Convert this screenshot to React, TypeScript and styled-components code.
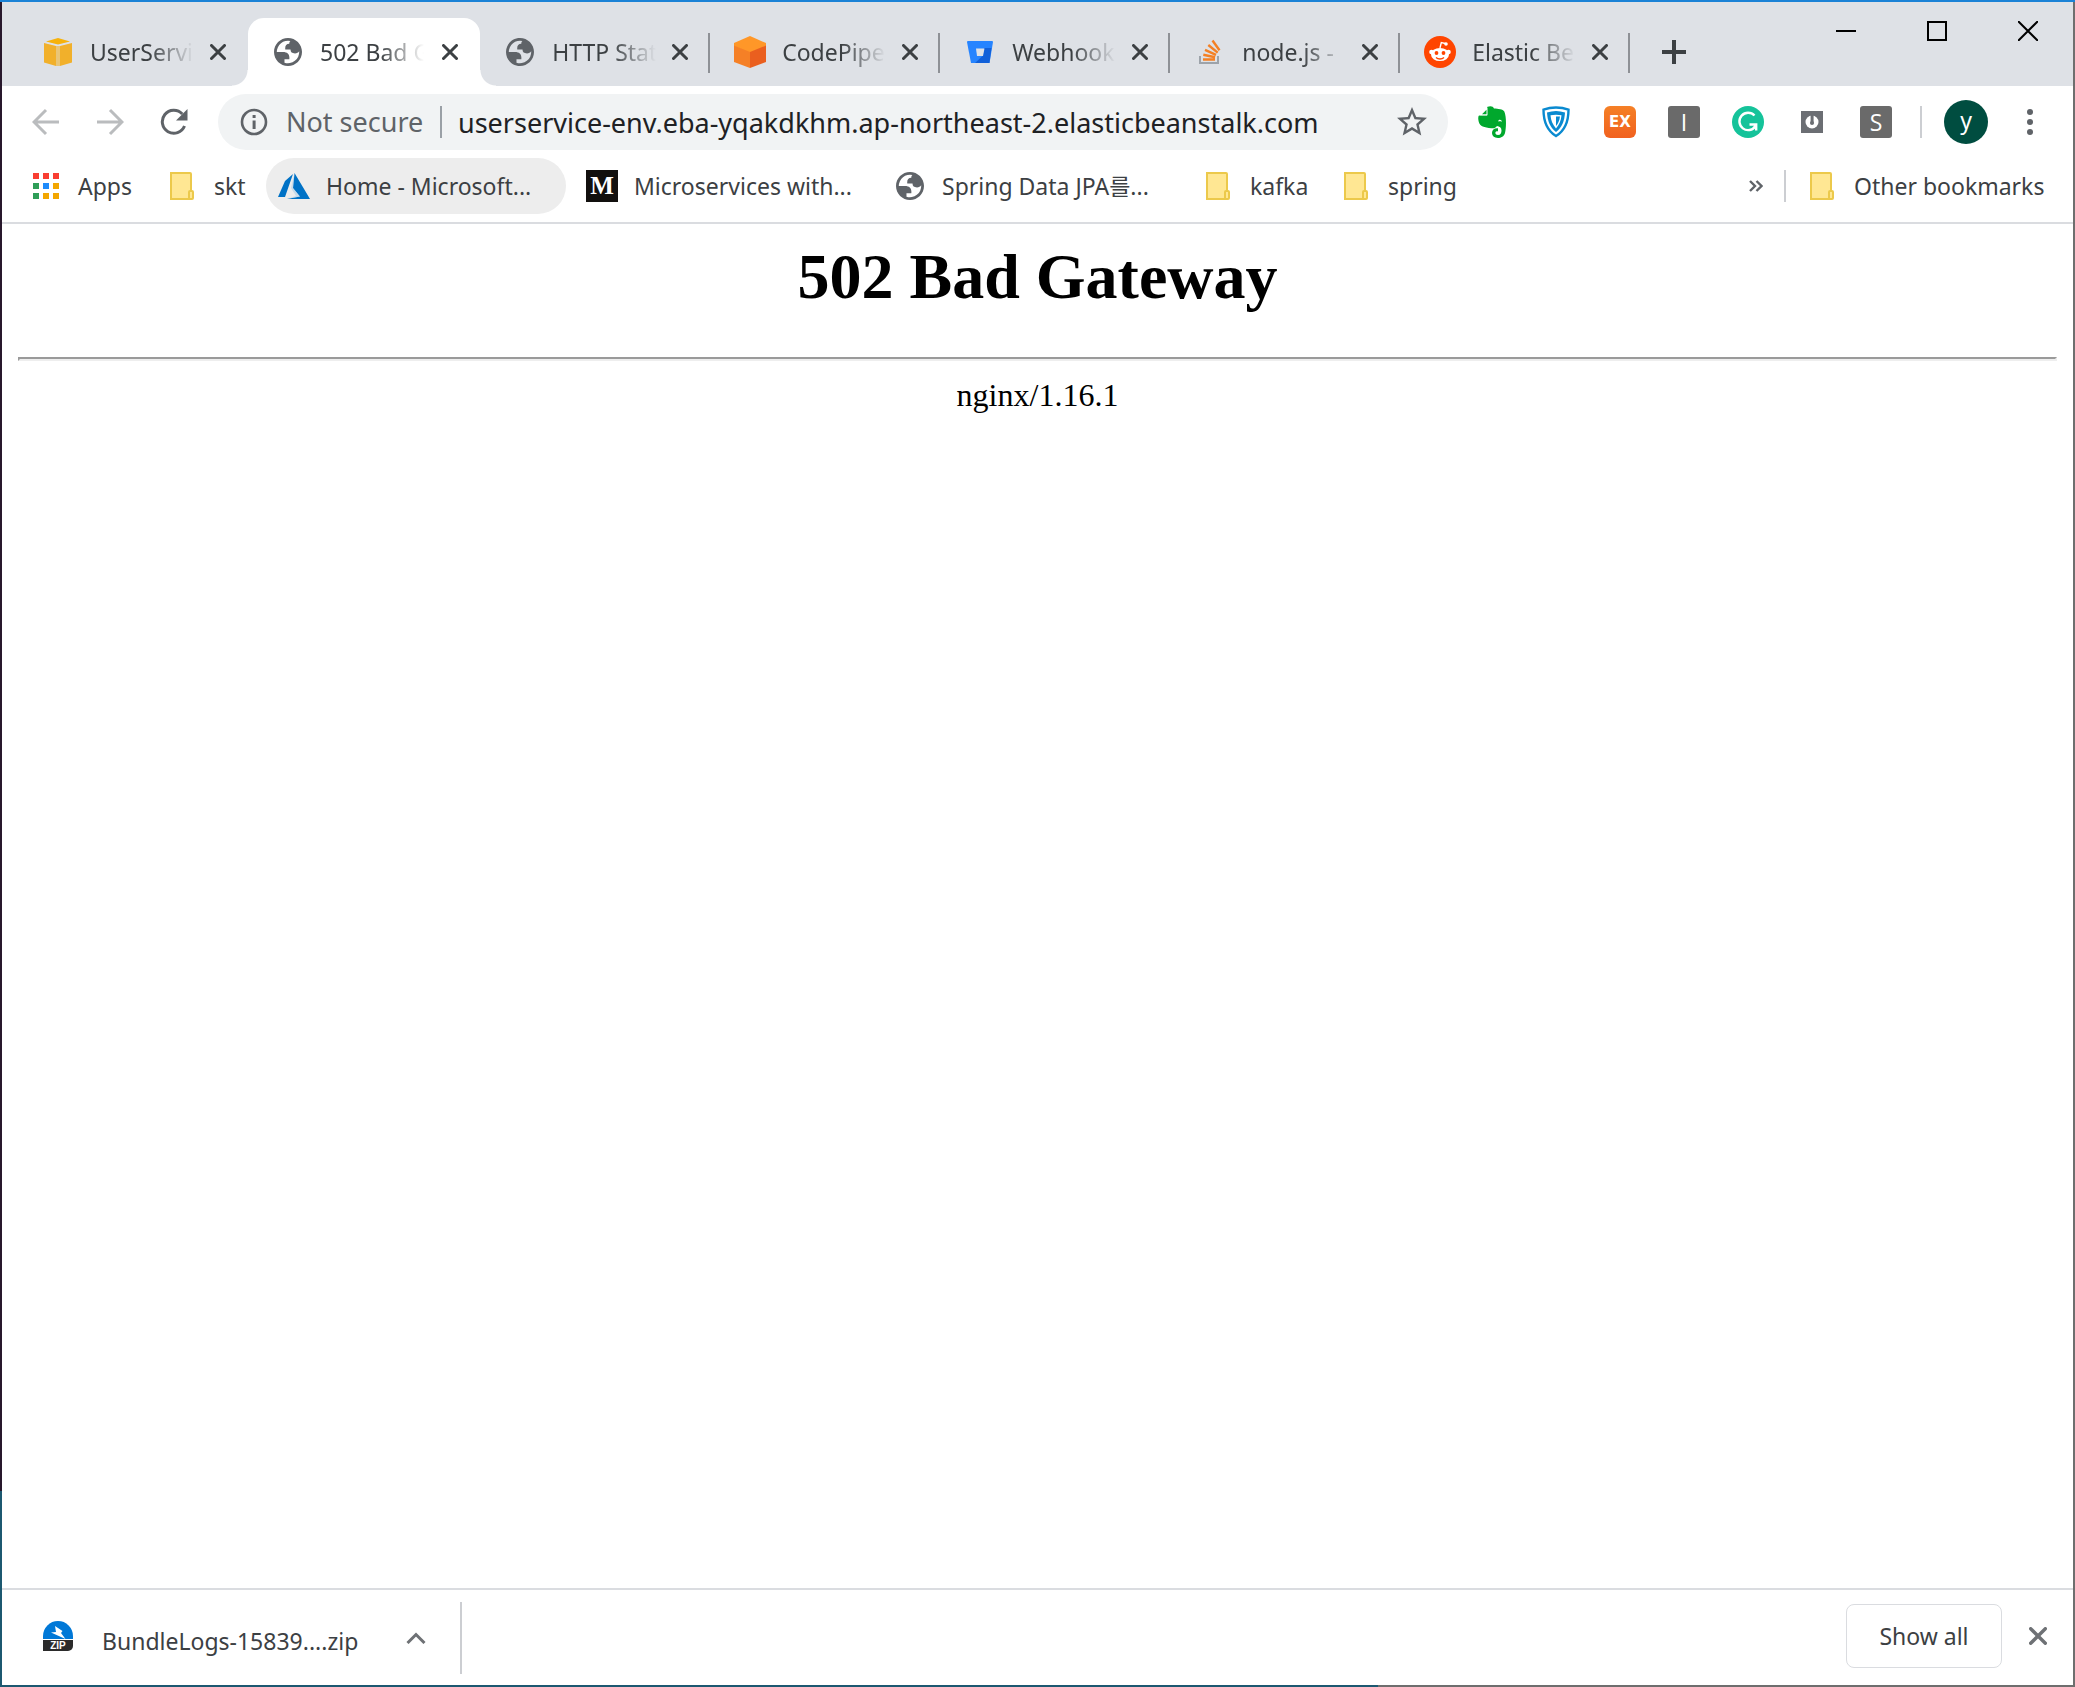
import React from "react";
import styled, { createGlobalStyle, css } from "styled-components";

const uiFont = `"Noto Sans", "Noto Sans CJK KR", sans-serif`;

const GlobalStyle = createGlobalStyle`
  *, *::before, *::after { box-sizing: border-box; }
  html, body { margin: 0; background: #fff; }
  button, input { font: inherit; color: inherit; }
`;

/* The 2px frame shows a dimmed desktop behind the window edges. */
const Window = styled.div`
  display: flex;
  flex-direction: column;
  min-height: 100vh;
  border: 2px solid transparent;
  background:
    linear-gradient(#fff, #fff) padding-box,
    linear-gradient(#1a82d6, #1a82d6) top / 100% 2px no-repeat border-box,
    linear-gradient(to right, #1c5870 66.4%, #6e6e6e 66.4%) bottom / 100% 2px no-repeat border-box,
    linear-gradient(#6e6e6e, #6e6e6e) right / 2px 100% no-repeat border-box,
    linear-gradient(#28182c 88.4%, #1c5870 88.4%) left / 2px 100% no-repeat border-box;
  color: #3c4043;
  font-family: ${uiFont};
  font-size: 23px;
  line-height: 32px;
`;

/* ---------- tab strip ---------- */

const TabStrip = styled.header`
  display: flex;
  align-items: stretch;
  height: 84px;
  padding: 16px 0 0 16px;
  background: #dee1e6;
`;

const Tab = styled.div<{ $active?: boolean; $divided?: boolean }>`
  position: relative;
  display: flex;
  align-items: center;
  flex: 0 0 230px;
  padding: 0 10px 0 24px;
  ${(p) =>
    p.$active &&
    css`
      background: #fff;
      border-radius: 16px 16px 0 0;
      &::before,
      &::after {
        content: "";
        position: absolute;
        bottom: 0;
        width: 16px;
        height: 16px;
      }
      &::before {
        left: -16px;
        background: radial-gradient(circle at 0 0, transparent 15px, #fff 16px);
      }
      &::after {
        right: -16px;
        background: radial-gradient(circle at 100% 0, transparent 15px, #fff 16px);
      }
    `}
  ${(p) =>
    p.$divided &&
    css`
      &::after {
        content: "";
        position: absolute;
        right: 0;
        top: 15px;
        width: 2px;
        height: 40px;
        background: #8e9196;
      }
    `}
`;

const TabIcon = styled.span`
  display: grid;
  place-items: center;
  flex: 0 0 32px;
  height: 32px;
`;

const TabTitle = styled.span`
  flex: 0 0 108px;
  margin-left: 16px;
  white-space: nowrap;
  mask-image: linear-gradient(to right, #000 60px, transparent 104px);
`;

const GhostButton = styled.button<{ $w?: number; $h?: number }>`
  display: grid;
  place-items: center;
  flex: none;
  width: ${(p) => p.$w ?? 56}px;
  height: ${(p) => p.$h ?? 56}px;
  padding: 0;
  border: 0;
  background: none;
`;

const WindowControls = styled.div`
  display: flex;
  margin: -16px 0 0 auto;
`;

/* ---------- toolbar ---------- */

const Toolbar = styled.div`
  display: flex;
  align-items: center;
  gap: 8px;
  padding: 8px 15px 8px 16px;
`;

const AddressBar = styled.form`
  display: flex;
  align-items: center;
  flex: 1;
  min-width: 0;
  height: 56px;
  margin: 0 8px;
  padding: 0 8px;
  border-radius: 28px;
  background: #f1f3f4;
  font-size: 27px;
`;

const Security = styled.label`
  flex: none;
  width: 156px;
  margin-left: 4px;
  border-right: 2px solid #9aa0a6;
  color: #5f6368;
  white-space: nowrap;
`;

const AddressInput = styled.input`
  flex: 1;
  min-width: 0;
  height: 48px;
  padding: 0 0 0 16px;
  border: 0;
  background: none;
  color: #202124;
`;

const Divider = styled.span<{ $h: number; $mx: number }>`
  flex: none;
  width: 2px;
  height: ${(p) => p.$h}px;
  margin: 0 ${(p) => p.$mx}px;
  background: #ccced2;
`;

const Avatar = styled.span`
  display: block;
  width: 44px;
  height: 44px;
  border-radius: 50%;
  background: #004d40;
  color: #fff;
  line-height: 40px;
`;

const LetterBadge = styled.span`
  width: 32px;
  height: 32px;
  border-radius: 3px;
  background: #6a6a6a;
  color: #fff;
  font-family: "Open Sans", sans-serif;
  line-height: 32px;
`;

const OrangeBadge = styled(LetterBadge)`
  border-radius: 6px;
  background: linear-gradient(#f58026, #f1611f);
  font-family: "DejaVu Sans", sans-serif;
  font-size: 15px;
  font-weight: bold;
`;

/* ---------- bookmarks ---------- */

const BookmarkBar = styled.nav`
  display: flex;
  align-items: center;
  gap: 8px;
  height: 66px;
  padding: 0 15px 8px 16px;
  border-bottom: 2px solid #dadce0;
`;

const Bookmark = styled.a<{ $w: number; $hover?: boolean }>`
  display: flex;
  align-items: center;
  flex: none;
  width: ${(p) => p.$w}px;
  height: 56px;
  padding-left: 12px;
  border-radius: 28px;
  background: ${(p) => (p.$hover ? "#ededed" : "transparent")};
  color: inherit;
  text-decoration: none;
  white-space: nowrap;
`;

const BookmarkText = styled.span`
  margin-left: 16px;
`;

const Spacer = styled.span`
  flex: 1;
`;

/* ---------- page ---------- */

const Page = styled.main`
  flex: 1;
  padding: 16px;
  color: #000;
  font-family: "Liberation Serif", serif;
  font-size: 32px;
  line-height: 36px;
  text-align: center;
`;

const Heading = styled.h1`
  margin: 0 0 43px;
  font-size: 64px;
  line-height: 74px;
`;

const Rule = styled.hr`
  height: 4px;
  margin: 0 0 16px;
  border: 2px solid;
  border-color: #9a9a9a #eee #eee #9a9a9a;
`;

/* ---------- download shelf ---------- */

const Shelf = styled.footer`
  display: flex;
  align-items: center;
  height: 97px;
  padding: 0 7px 0 40px;
  border-top: 2px solid #dadce0;
`;

const Download = styled.button`
  display: flex;
  align-items: center;
  margin-bottom: 4px;
  padding: 0;
  border: 0;
  background: none;
`;

const FileName = styled.span`
  width: 270px;
  margin-left: 28px;
  padding-top: 10px;
  text-align: left;
`;

const ShelfEnd = styled.div`
  display: flex;
  align-items: center;
  gap: 8px;
  margin: 0 0 4px auto;
`;

const ShowAll = styled.button`
  width: 156px;
  height: 64px;
  padding: 0;
  border: 1px solid #dadce0;
  border-radius: 8px;
  background: #fff;
`;

/* ---------- icons ---------- */

const Globe = () => (
  <svg width="28" height="28" viewBox="2 2 20 20" fill="#5f6368">
    <path
      fillRule="evenodd"
      d="M12 2c5.520 0 10 4.480 10 10s-4.480 10-10 10S2 17.520 2 12 6.480 2 12 2zM4 12h4.400c3.407.022 4.922 1.730 4.543 5.127H9.488v2.470a8.004 8.004 0 0 0 10.498-8.083C19.327 12.504 18.332 13 17 13c-2.137 0-3.206-.916-3.206-2.750h-3.748c-.274-2.728.683-4.092 2.870-4.092 0-.975.327-1.597.811-1.970A8.004 8.004 0 0 0 4 12z"
    />
  </svg>
);

const Close = ({ size = 16, color = "#3c4043", width = 3 }) => (
  <svg width={size} height={size} viewBox="0 0 16 16" stroke={color} strokeWidth={width} strokeLinecap="round">
    <path d="M1.500 1.500l13 13M14.500 1.500l-13 13" />
  </svg>
);

const AwsCube = () => (
  <svg width="28" height="28" viewBox="0 0 28 28">
    <path fill="#f7b20b" d="M2 3.500 14 0l12 3.500L14 6.500z" />
    <path fill="#f1b02b" d="M0 5 12 8v20L0 24.500zM28 5 16 8v20l12-3.500z" />
    <path fill="#e9c577" d="M12 8h4v20h-4z" />
  </svg>
);

const OrangeCube = () => (
  <svg width="32" height="32" viewBox="0 0 32 32">
    <path fill="#ff9728" d="M16 0 32 7v3l-16 7L0 10V7z" />
    <path fill="#f58026" d="M0 9.500 16 16v16L0 26z" />
    <path fill="#ea5f1f" d="M32 9.500 16 16v16l16-6z" />
  </svg>
);

const Bitbucket = () => (
  <svg width="26" height="24" viewBox="0 0 26 24">
    <path fill="#2684ff" d="M1 1h24a1 1 0 0 1 1 1l-3.500 21H4L0 2a1 1 0 0 1 1-1z" />
    <path fill="#0b54cc" d="M24.500 8H17l-1.500 8L8 23h14.500z" opacity=".75" />
    <path fill="#dee1e6" d="M9 8.500h8.500L16 16h-6z" />
  </svg>
);

const StackOverflow = () => (
  <svg width="24" height="26" viewBox="0 0 24 26" fill="none">
    <path stroke="#9da3aa" strokeWidth="2" d="M2 17v7h18v-7" />
    <path stroke="#f48024" strokeWidth="2.400" d="M5 20.500h12M5.300 15.800l11.800 2.400M7 10.800l11 5M10.300 6l9.400 7.600M14.500 1.500l7 9.700" />
  </svg>
);

const Reddit = () => (
  <svg width="32" height="32" viewBox="0 0 32 32">
    <circle cx="16" cy="16" r="16" fill="#ff4500" />
    <path d="M16 12l1.300-5.500 5 1.200" fill="none" stroke="#fff" strokeWidth="1.400" />
    <g fill="#fff">
      <circle cx="22" cy="8" r="1.800" />
      <circle cx="7.500" cy="16" r="2.300" />
      <circle cx="24.500" cy="16" r="2.300" />
      <ellipse cx="16" cy="18.500" rx="9" ry="6.600" />
    </g>
    <circle cx="12.500" cy="17" r="1.900" fill="#ff4500" />
    <circle cx="19.500" cy="17" r="1.900" fill="#ff4500" />
    <path d="M12 21.500c2 2 6 2 8 0" fill="none" stroke="#ff4500" strokeWidth="1.300" />
  </svg>
);

const Arrow = ({ flip = false }) => (
  <svg width="28" height="28" viewBox="0 0 28 28" fill="none" stroke="#babcbe" strokeWidth="3">
    <path d={flip ? "M1 14h24M14 2l12 12-12 12" : "M27 14H3M14 2 2 14l12 12"} />
  </svg>
);

const Reload = () => (
  <svg width="28" height="28" viewBox="0 0 28 28">
    <path d="M24.500 18a11.500 11.500 0 1 1-2.200-12" fill="none" stroke="#5f6368" strokeWidth="3" />
    <path d="M27.500 1v11.500H16z" fill="#5f6368" />
  </svg>
);

const Info = () => (
  <svg width="28" height="28" viewBox="0 0 28 28">
    <circle cx="14" cy="14" r="12" fill="none" stroke="#5f6368" strokeWidth="2.600" />
    <path fill="#5f6368" d="M12.600 7h3v3h-3zM12.600 12.500h3V21h-3z" />
  </svg>
);

const Star = () => (
  <svg width="30" height="30" viewBox="2 2 20 20" fill="#5f6368">
    <path d="M22 9.240l-7.190-.620L12 2 9.190 8.630 2 9.240l5.460 4.730L5.820 21 12 17.270 18.180 21l-1.630-7.030L22 9.240zM12 15.400l-3.760 2.270 1-4.280-3.320-2.880 4.380-.380L12 6.100l1.710 4.040 4.380.380-3.320 2.880 1 4.280L12 15.400z" />
  </svg>
);

const Evernote = () => (
  <svg width="28" height="32" viewBox="0 0 28 32">
    <path fill="#00a82d" d="M9 1c4-1.500 6-.5 7 1.500 4 .3 9 .6 10.300 3C28.500 10 28.300 22 27 27c-1 3.600-4 5-7 5-4 0-6-2.200-6-5.200 0-3.300 2.500-5 6-4.600v3.200c-1.600-.2-2.600.3-2.600 1.500 0 1.300 1 2 2.600 2 2.500 0 3.500-2 3.500-4.500 0-3-2-4-4.500-4.400-1.500 2-3 2.500-5.500 2.200C6 21.500 2 20.500.8 16 0 13 0 10.500 1 9.500h8z" />
    <path fill="#fff" d="M1.500 9.200 9.500 1.200v8z" />
    <path fill="#00a82d" d="M4 8.200 8.500 3.700v4.500z" />
    <path fill="#fff" d="M20 15.500c.5-2.500 3.500-2.500 4 .3-1.200-.5-2.500-.6-4-.3z" />
  </svg>
);

const Shield = () => (
  <svg width="28" height="32" viewBox="0 0 28 32">
    <path fill="#fff" stroke="#0a8ad0" strokeWidth="2.400" d="M14 1.500c4 0 8.500.7 12.500 2.200C26.500 15 23 24.500 14 30 5 24.500 1.500 15 1.500 3.700 5.500 2.200 10 1.500 14 1.500z" />
    <path fill="#0a8ad0" d="M14 5c3 0 6 .5 9 1.500C22.500 15 20 21.500 14 26 8 21.500 5.500 15 5 6.500 8 5.500 11 5 14 5z" />
    <path fill="#fff" d="M8.500 9.300c3-.9 8-.9 11 0-.4 5-2.300 9.700-5.500 13.200-3.200-3.500-5.100-8.200-5.500-13.200z" />
    <path fill="#0a8ad0" d="M14 10.500h4c-.5 3.800-1.800 7-4 9.500z" />
  </svg>
);

const Grammarly = () => (
  <svg width="32" height="32" viewBox="0 0 32 32" fill="none" stroke="#fff" strokeWidth="2.400">
    <circle cx="16" cy="16" r="16" fill="#15c39a" stroke="none" />
    <path d="M22.500 9.500a8.700 8.700 0 1 0 1 10.500M17.500 18.500h6.700v6" />
  </svg>
);

const PowerBox = () => (
  <svg width="22" height="22" viewBox="0 0 22 22">
    <path fill="#6b6e73" d="M0 0h22v22H0z" />
    <circle cx="11" cy="11" r="6.500" fill="#fff" />
    <path fill="#6b6e73" d="M9.600 3h3v9.500h-3z" />
    <circle cx="11" cy="12" r="2" fill="#6b6e73" />
  </svg>
);

const Dots = () => (
  <svg width="6" height="26" viewBox="0 0 6 26" fill="#5f6368">
    <circle cx="3" cy="3" r="3" />
    <circle cx="3" cy="13" r="3" />
    <circle cx="3" cy="23" r="3" />
  </svg>
);

const appColors = ["#f93e32", "#f93e32", "#f93e32", "#2f9e58", "#1f8bfb", "#f3a600", "#2f9e58", "#f3a600", "#f3a600"];

const AppsGrid = () => (
  <svg width="26" height="26" viewBox="0 0 26 26">
    {appColors.map((c, i) => (
      <rect key={i} x={(i % 3) * 10} y={Math.floor(i / 3) * 10} width="6" height="6" fill={c} />
    ))}
  </svg>
);

const Folder = () => (
  <svg width="24" height="28" viewBox="0 0 24 28" fill="#ffe793" stroke="#ecc94b" strokeWidth="2">
    <path d="M1 1h19a1 1 0 0 1 1 1v25H1z" />
    <rect x="19" y="19" width="4" height="8" rx="1" />
  </svg>
);

const Azure = () => (
  <svg width="32" height="26" viewBox="0 0 32 26">
    <path fill="#0072c6" d="M15 1 7 8 0 24h7zM16.500 0 32 26H9l13-2.500-7-8.500z" />
    <path fill="#8fc0e6" d="M9 26l13-2.500L15 15l1.500-15L13 15l5 8z" opacity=".4" />
  </svg>
);

const MediumBox = styled.span`
  width: 32px;
  height: 32px;
  background: #12100e;
  color: #fff;
  font: bold 25px/32px "Liberation Serif", serif;
  text-align: center;
`;

const ZipIcon = () => (
  <svg width="30" height="30" viewBox="0 0 30 30">
    <path fill="#0078d7" d="M0 18v-3a15 15 0 0 1 30 0v3z" />
    <path fill="#fff" d="M12 5l7.500 5-1.500 2 4.500 6L8 11.500l5-.5z" />
    <path fill="#2b2b2b" d="M0 19h30v6a5 5 0 0 1-5 5H0z" />
    <text x="15" y="28" fill="#fff" fontFamily="Liberation Sans, sans-serif" fontWeight="bold" fontSize="10" textAnchor="middle">ZIP</text>
  </svg>
);

/* ---------- data ---------- */

const tabs = [
  { title: "UserServi", icon: <AwsCube /> },
  { title: "502 Bad G", icon: <Globe />, active: true },
  { title: "HTTP Stat", icon: <Globe />, divided: true },
  { title: "CodePipe", icon: <OrangeCube />, divided: true },
  { title: "Webhook", icon: <Bitbucket />, divided: true },
  { title: "node.js -", icon: <StackOverflow />, divided: true },
  { title: "Elastic Be", icon: <Reddit />, divided: true },
];

const bookmarks = [
  { text: "Apps", icon: <AppsGrid />, w: 128 },
  { text: "skt", icon: <Folder />, w: 104 },
  { text: "Home - Microsoft...", icon: <Azure />, w: 300, hover: true },
  { text: "Microservices with...", icon: <MediumBox>M</MediumBox>, w: 300 },
  { text: "Spring Data JPA를...", icon: <Globe />, w: 300 },
  { text: "kafka", icon: <Folder />, w: 130 },
  { text: "spring", icon: <Folder />, w: 140 },
];

const extensions = [
  { name: "Evernote", icon: <Evernote /> },
  { name: "VPN", icon: <Shield /> },
  { name: "EX", icon: <OrangeBadge>EX</OrangeBadge> },
  { name: "I", icon: <LetterBadge>I</LetterBadge> },
  { name: "Grammarly", icon: <Grammarly /> },
  { name: "Power", icon: <PowerBox /> },
  { name: "S", icon: <LetterBadge>S</LetterBadge> },
];

export default function App() {
  return (
    <Window>
      <GlobalStyle />
      <TabStrip>
        {tabs.map((t) => (
          <Tab key={t.title} $active={t.active} $divided={t.divided}>
            <TabIcon>{t.icon}</TabIcon>
            <TabTitle>{t.title}</TabTitle>
            <GhostButton $w={40} $h={40} aria-label="Close tab">
              <Close />
            </GhostButton>
          </Tab>
        ))}
        <GhostButton $w={88} $h={68} aria-label="New tab">
          <svg width="24" height="24" viewBox="0 0 24 24" stroke="#3c4043" strokeWidth="4">
            <path d="M12 0v24M0 12h24" />
          </svg>
        </GhostButton>
        <WindowControls>
          <GhostButton $w={91} $h={58} aria-label="Minimize">
            <svg width="20" height="20" viewBox="0 0 20 20">
              <path d="M0 9h20v2H0z" />
            </svg>
          </GhostButton>
          <GhostButton $w={91} $h={58} aria-label="Maximize">
            <svg width="20" height="20" viewBox="0 0 20 20" fill="none" stroke="#000" strokeWidth="2">
              <path d="M1 1h18v18H1z" />
            </svg>
          </GhostButton>
          <GhostButton $w={91} $h={58} aria-label="Close window">
            <svg width="20" height="20" viewBox="0 0 20 20" stroke="#000" strokeWidth="2">
              <path d="M0 0l20 20M20 0 0 20" />
            </svg>
          </GhostButton>
        </WindowControls>
      </TabStrip>

      <Toolbar>
        <GhostButton aria-label="Back"><Arrow /></GhostButton>
        <GhostButton aria-label="Forward"><Arrow flip /></GhostButton>
        <GhostButton aria-label="Reload"><Reload /></GhostButton>
        <AddressBar>
          <GhostButton type="button" aria-label="Site information"><Info /></GhostButton>
          <Security htmlFor="address">Not secure</Security>
          <AddressInput id="address" defaultValue="userservice-env.eba-yqakdkhm.ap-northeast-2.elasticbeanstalk.com" />
          <GhostButton type="button" aria-label="Bookmark this page"><Star /></GhostButton>
        </AddressBar>
        {extensions.map((e) => (
          <GhostButton key={e.name} aria-label={e.name}>{e.icon}</GhostButton>
        ))}
        <Divider $h={32} $mx={8} />
        <GhostButton aria-label="Profile"><Avatar>y</Avatar></GhostButton>
        <GhostButton aria-label="Menu"><Dots /></GhostButton>
      </Toolbar>

      <BookmarkBar>
        {bookmarks.map((b) => (
          <Bookmark key={b.text} href="#" $w={b.w} $hover={b.hover}>
            <TabIcon>{b.icon}</TabIcon>
            <BookmarkText>{b.text}</BookmarkText>
          </Bookmark>
        ))}
        <Spacer />
        <GhostButton $w={40} aria-label="More bookmarks">
          <svg width="14" height="12" viewBox="0 0 14 12" fill="none" stroke="#5f6368" strokeWidth="2.400">
            <path d="M1 1l5 5-5 5M7.500 1l5 5-5 5" />
          </svg>
        </GhostButton>
        <Divider $h={32} $mx={0} />
        <Bookmark href="#" $w={264}>
          <TabIcon><Folder /></TabIcon>
          <BookmarkText>Other bookmarks</BookmarkText>
        </Bookmark>
      </BookmarkBar>

      <Page>
        <Heading>502 Bad Gateway</Heading>
        <Rule />
        nginx/1.16.1
      </Page>

      <Shelf>
        <Download>
          <TabIcon><ZipIcon /></TabIcon>
          <FileName>BundleLogs-15839....zip</FileName>
        </Download>
        <GhostButton $w={88} aria-label="Download options">
          <svg width="20" height="12" viewBox="0 0 20 12" fill="none" stroke="#6e7175" strokeWidth="3">
            <path d="M1.500 11 10 2.500l8.500 8.500" />
          </svg>
        </GhostButton>
        <Divider $h={72} $mx={0} />
        <ShelfEnd>
          <ShowAll>Show all</ShowAll>
          <GhostButton aria-label="Close downloads bar">
            <Close size={18} color="#6e7175" />
          </GhostButton>
        </ShelfEnd>
      </Shelf>
    </Window>
  );
}
